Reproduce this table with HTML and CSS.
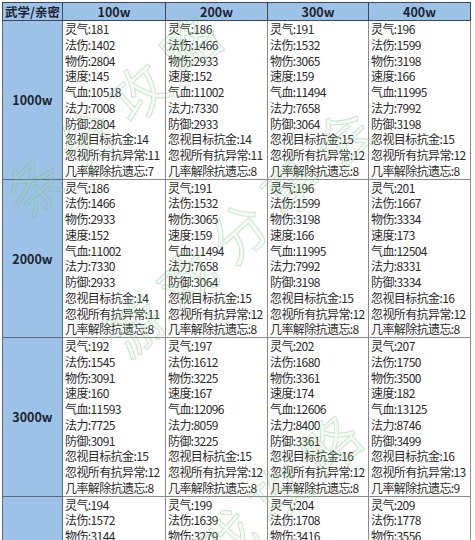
FILE: index.html
```html
<!DOCTYPE html>
<html lang="zh">
<head>
<meta charset="utf-8">
<link rel="stylesheet" href="styles.css">
</head>
<body>
<div class="sheet">
<table class="grid">
<colgroup><col class="c0"><col class="c1"><col class="c2"><col class="c3"><col class="c4"></colgroup>
<thead>
<tr><th class="corner">武学/亲密</th><th>100w</th><th>200w</th><th>300w</th><th>400w</th></tr>
</thead>
<tbody>
<tr><th class="side">1000w</th>
<td>灵气:181<br>法伤:1402<br>物伤:2804<br>速度:145<br>气血:10518<br>法力:7008<br>防御:2804<br>忽视目标抗金:14<br>忽视所有抗异常:11<br>几率解除抗遗忘:7</td>
<td>灵气:186<br>法伤:1466<br>物伤:2933<br>速度:152<br>气血:11002<br>法力:7330<br>防御:2933<br>忽视目标抗金:14<br>忽视所有抗异常:11<br>几率解除抗遗忘:8</td>
<td>灵气:191<br>法伤:1532<br>物伤:3065<br>速度:159<br>气血:11494<br>法力:7658<br>防御:3064<br>忽视目标抗金:15<br>忽视所有抗异常:12<br>几率解除抗遗忘:8</td>
<td>灵气:196<br>法伤:1599<br>物伤:3198<br>速度:166<br>气血:11995<br>法力:7992<br>防御:3198<br>忽视目标抗金:15<br>忽视所有抗异常:12<br>几率解除抗遗忘:8</td>
</tr>
<tr><th class="side">2000w</th>
<td>灵气:186<br>法伤:1466<br>物伤:2933<br>速度:152<br>气血:11002<br>法力:7330<br>防御:2933<br>忽视目标抗金:14<br>忽视所有抗异常:11<br>几率解除抗遗忘:8</td>
<td>灵气:191<br>法伤:1532<br>物伤:3065<br>速度:159<br>气血:11494<br>法力:7658<br>防御:3064<br>忽视目标抗金:15<br>忽视所有抗异常:12<br>几率解除抗遗忘:8</td>
<td>灵气:196<br>法伤:1599<br>物伤:3198<br>速度:166<br>气血:11995<br>法力:7992<br>防御:3198<br>忽视目标抗金:15<br>忽视所有抗异常:12<br>几率解除抗遗忘:8</td>
<td>灵气:201<br>法伤:1667<br>物伤:3334<br>速度:173<br>气血:12504<br>法力:8331<br>防御:3334<br>忽视目标抗金:16<br>忽视所有抗异常:12<br>几率解除抗遗忘:8</td>
</tr>
<tr><th class="side">3000w</th>
<td>灵气:192<br>法伤:1545<br>物伤:3091<br>速度:160<br>气血:11593<br>法力:7725<br>防御:3091<br>忽视目标抗金:15<br>忽视所有抗异常:12<br>几率解除抗遗忘:8</td>
<td>灵气:197<br>法伤:1612<br>物伤:3225<br>速度:167<br>气血:12096<br>法力:8059<br>防御:3225<br>忽视目标抗金:15<br>忽视所有抗异常:12<br>几率解除抗遗忘:8</td>
<td>灵气:202<br>法伤:1680<br>物伤:3361<br>速度:174<br>气血:12606<br>法力:8400<br>防御:3361<br>忽视目标抗金:16<br>忽视所有抗异常:12<br>几率解除抗遗忘:8</td>
<td>灵气:207<br>法伤:1750<br>物伤:3500<br>速度:182<br>气血:13125<br>法力:8746<br>防御:3499<br>忽视目标抗金:16<br>忽视所有抗异常:13<br>几率解除抗遗忘:9</td>
</tr>
<tr class="last"><th class="side">4000w</th>
<td>灵气:194<br>法伤:1572<br>物伤:3144</td>
<td>灵气:199<br>法伤:1639<br>物伤:3279</td>
<td>灵气:204<br>法伤:1708<br>物伤:3416</td>
<td>灵气:209<br>法伤:1778<br>物伤:3556</td>
</tr>
</tbody>
</table>
<div class="mark m1">条分攻略</div>
<div class="mark m2">游戏分享会</div>
<div class="mark m3">游戏攻略</div>
</div>
</body>
</html>
```

FILE: styles.css
```css
html, body {
  margin: 0;
  padding: 0;
  background: #ffffff;
  overflow: hidden;
}
body {
  padding: 2px 0 0 2px;
  font-family: "Noto Sans CJK SC", "Noto Sans", sans-serif;
  color: #2a2a2a;
}
.sheet {
  position: relative;
  width: 469px;
}
.grid {
  border-collapse: collapse;
  table-layout: fixed;
  width: 469px;
  font-size: 12px;
}
.c0 { width: 60px; }
.c1 { width: 103px; }
.c2 { width: 102px; }
.c3 { width: 101px; }
.c4 { width: 102px; }
.grid th {
  background: #9cc3e7;
  font-weight: 700;
  font-size: 12.5px;
  color: #1c2430;
  text-align: center;
  vertical-align: middle;
  border: 1px solid #3c4654;
  padding: 0;
  height: 17px;
  line-height: 17px;
}
.grid th.side {
  border-color: #5a6a7c;
}
.grid td {
  border: 1px solid #8a8a8a;
  padding: 0 0 0 2px;
  vertical-align: top;
  line-height: 15.75px;
  white-space: nowrap;
  overflow: hidden;
  letter-spacing: -0.6px;
}
.grid .last td {
  height: 157px;
}
.mark {
  position: absolute;
  font-size: 56px;
  font-weight: 400;
  letter-spacing: 14px;
  color: rgba(150, 210, 150, 0.10);
  -webkit-text-stroke: 1px rgba(120, 190, 120, 0.35);
  white-space: nowrap;
  transform-origin: left center;
  transform: rotate(-42deg);
  pointer-events: none;
}
.m1 { left: 10px; top: 160px; }
.m2 { left: 110px; top: 300px; }
.m3 { left: 150px; top: 560px; }
```
